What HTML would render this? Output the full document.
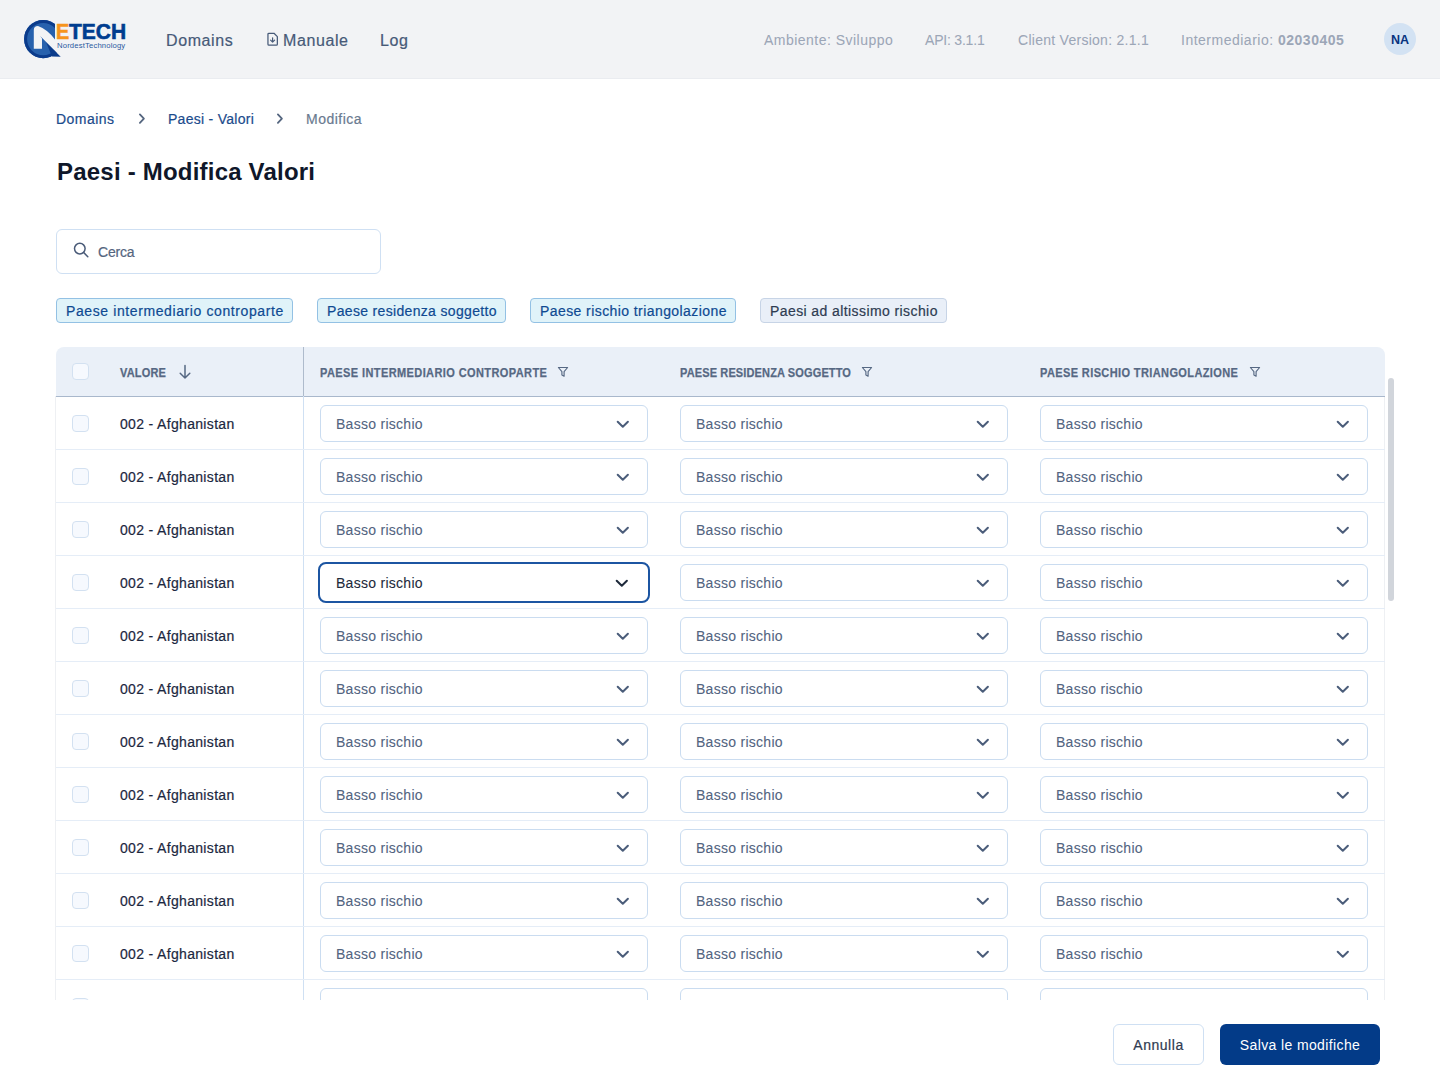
<!DOCTYPE html>
<html><head><meta charset="utf-8">
<style>
*{box-sizing:border-box;margin:0;padding:0}
html,body{width:1440px;height:1089px;overflow:hidden;background:#fff;font-family:"Liberation Sans",sans-serif;-webkit-text-stroke:0.2px currentColor}
.abs{position:absolute;white-space:nowrap}
#hdr{position:absolute;left:0;top:0;width:1440px;height:79px;background:#f2f3f5;border-bottom:1px solid #eaecf0}
.nav{font-size:16px;color:#475a78;line-height:16px;letter-spacing:0.6px}
.info{font-size:14px;color:#9ca6b7;line-height:14px;-webkit-text-stroke:0.05px currentColor}
#avatar{position:absolute;left:1384px;top:23.3px;width:32px;height:32px;border-radius:50%;background:#d3e2f3;color:#08337f;font-weight:700;font-size:12.5px;line-height:34px;text-align:center}
.bc{font-size:14px;line-height:14px}
.chip{position:absolute;top:298px;overflow:hidden;padding-top:1px!important;height:25px;border:1px solid #93c1e4;background:#e0f3f9;color:#0f4a92;border-radius:4px;font-size:14px;line-height:23px;padding:0 9px;white-space:nowrap}
.chip.g{border-color:#c7d4e6;background:#e9eff8;color:#2e3c52}
#table{position:absolute;left:55px;top:347px;width:1330px;height:653px;overflow:hidden}
#tb{position:absolute;left:0;top:49px;width:1330px;height:620px;border-left:1px solid #eef0f3;border-right:1px solid #eef0f3}
#thead{position:absolute;left:0;top:0;width:1329px;height:50px;background:#eaf0f8;border-bottom:1px solid #a9b8cc;border-radius:8px 8px 0 0}
.th{position:absolute;top:19.5px;transform:scaleX(0.88);transform-origin:0 0;font-size:12.5px;font-weight:700;color:#566883;line-height:12px;white-space:nowrap}
.row{position:absolute;left:0;width:1329px;height:53px;border-bottom:1px solid #e5edf7}
.cb{position:absolute;left:16px;width:17px;height:17px;border:1px solid #d3e1f1;background:#f6f9fe;border-radius:4px}
.val{position:absolute;left:64px;top:20px;letter-spacing:0.33px;font-size:14px;color:#1c2740;line-height:14px;white-space:nowrap}
.dd{position:absolute;top:8px;width:328px;height:37px;border:1px solid #cadcf0;border-radius:6px;background:#fff}
.dd span{position:absolute;left:15px;top:10.5px;letter-spacing:0.28px;-webkit-text-stroke:0.08px currentColor;font-size:14px;line-height:14px;color:#52647f;white-space:nowrap}
.dd svg{position:absolute;left:295px;top:13.5px}
.dd.f{border:2px solid #1c55a2;border-radius:8px;left:262px!important;top:6px;width:332px;height:41px}
.dd.f span{left:16px;top:12px;color:#1e2a3b}
.dd.f svg{left:295px;top:14.5px}
#vdiv{position:absolute;left:247px;top:0;width:1px;height:653px;background:#cfe0f3}
#scroll{position:absolute;left:1388px;top:378px;width:6px;height:223px;border-radius:3px;background:#d1d5db}
.btn{position:absolute;top:1024px;padding-top:1px;height:41px;border-radius:6px;font-size:14px;line-height:39px;text-align:center;white-space:nowrap}
b,#avatar,.nostroke{-webkit-text-stroke:0}
.th{-webkit-text-stroke:0.25px currentColor}
</style></head><body>
<div id="hdr">
  <svg class="abs" style="left:0;top:0" width="140" height="78" viewBox="0 0 140 78">
    <circle cx="43.2" cy="39.1" r="19.1" fill="#2761ad"/>
    <circle cx="43.2" cy="39.1" r="17.6" fill="none" stroke="#0b3b8b" stroke-width="3"/>
    <polygon points="46,42 60.9,56.8 52,56.6" fill="#0b3b8b"/>
    <path d="M33.8,48.7 L42,48.7 L42,38.5 L40.2,36 L60.9,56.8 L75,56.8 L75,0 L55,0 L55,39.5 Q47,29 38,26 Q33.8,26 33.8,30 Z" fill="#f2f3f5"/>
    <g transform="translate(55.9,39.3) scale(0.9,1)"><text x="0" y="0" font-family="Liberation Sans" font-weight="700" font-size="22" fill="#f7941d" stroke="#f7941d" stroke-width="0.6">E</text></g><g transform="translate(68.9,39.3) scale(0.955,1)"><text x="0" y="0" font-family="Liberation Sans" font-weight="700" font-size="22" fill="#003d8f" stroke="#003d8f" stroke-width="0.6">TECH</text></g>
    <text x="57" y="48.3" font-family="Liberation Sans" font-size="7.7" fill="#2a5aa0" letter-spacing="0.15">NordestTechnology</text>
  </svg>
  <div class="abs nav" style="left:166px;top:33px">Domains</div>
  <svg class="abs" style="left:266px;top:32px" width="14" height="15" viewBox="0 0 14 15">
    <path d="M3,1.25 h5 l3.35,3.35 v7.55 a1,1 0 0 1 -1,1 h-7.4 a1,1 0 0 1 -1,-1 v-9.9 a1,1 0 0 1 1,-1 z" fill="none" stroke="#475a78" stroke-width="1.25" stroke-linejoin="round"/>
    <path d="M6.6,5.8 v4.3 M4.6,8.1 l2,2 l2,-2" fill="none" stroke="#475a78" stroke-width="1.2" stroke-linecap="round" stroke-linejoin="round"/>
  </svg>
  <div class="abs nav" style="left:283px;top:33px">Manuale</div>
  <div class="abs nav" style="left:380px;top:33px">Log</div>
  <div class="abs info" style="left:764px;top:32.5px;letter-spacing:0.48px">Ambiente: Sviluppo</div>
  <div class="abs info" style="left:925px;top:32.5px;letter-spacing:-0.2px">API: 3.1.1</div>
  <div class="abs info" style="left:1018px;top:32.5px;letter-spacing:0.27px">Client Version: 2.1.1</div>
  <div class="abs info" style="left:1181px;top:32.5px;letter-spacing:0.5px">Intermediario: <b>02030405</b></div>
  <div id="avatar">NA</div>
</div>

<div class="abs bc" style="left:56px;top:112px;color:#1b4b8c;letter-spacing:0.45px">Domains</div>
<svg class="abs" style="left:137px;top:112px" width="10" height="14" viewBox="0 0 10 14"><path d="M2.9,2.4 L6.9,6.6 L2.9,10.8" fill="none" stroke="#55667f" stroke-width="1.8" stroke-linecap="round" stroke-linejoin="round"/></svg>
<div class="abs bc" style="left:168px;top:112px;color:#1b4b8c;letter-spacing:0.28px">Paesi - Valori</div>
<svg class="abs" style="left:275px;top:112px" width="10" height="14" viewBox="0 0 10 14"><path d="M2.9,2.4 L6.9,6.6 L2.9,10.8" fill="none" stroke="#55667f" stroke-width="1.8" stroke-linecap="round" stroke-linejoin="round"/></svg>
<div class="abs bc" style="left:306px;top:112px;color:#6a7a90;letter-spacing:0.5px">Modifica</div>

<div class="abs" style="left:57px;top:160px;letter-spacing:0.21px;-webkit-text-stroke:0;font-size:24px;line-height:24px;font-weight:700;color:#0f172a">Paesi - Modifica Valori</div>

<div class="abs" style="left:56px;top:229px;width:325px;height:45px;border:1px solid #cfe0f3;border-radius:6px"></div>
<svg class="abs" style="left:72px;top:241px" width="18" height="18" viewBox="0 0 18 18"><circle cx="7.8" cy="7.6" r="5.3" fill="none" stroke="#4a5b78" stroke-width="1.5"/><path d="M11.7,11.6 L15.8,15.8" stroke="#4a5b78" stroke-width="1.5" stroke-linecap="round"/></svg>
<div class="abs" style="left:98px;top:245px;letter-spacing:-0.2px;font-size:14px;line-height:14px;color:#55657e">Cerca</div>

<div class="chip" style="width:237px;left:56px;letter-spacing:0.6px">Paese intermediario controparte</div>
<div class="chip" style="width:189px;left:317px;letter-spacing:0.33px">Paese residenza soggetto</div>
<div class="chip" style="width:206px;left:530px;letter-spacing:0.42px">Paese rischio triangolazione</div>
<div class="chip g" style="width:187px;left:760px;letter-spacing:0.41px">Paesi ad altissimo rischio</div>

<div id="table"><div id="tb"></div><div style="position:absolute;left:1px;top:0;width:1329px;height:653px">
  <div id="thead">
    <div class="cb" style="top:16px"></div>
    <div class="th" style="left:64px;letter-spacing:0.2px">VALORE</div>
    <svg class="abs" style="left:121.5px;top:17px" width="14" height="16" viewBox="0 0 14 16"><path d="M7,1.5 V14 M2.2,9.2 L7,14 L11.8,9.2" fill="none" stroke="#566883" stroke-width="1.5" stroke-linecap="round" stroke-linejoin="round"/></svg>
    <div class="th" style="left:264px;letter-spacing:0.46px">PAESE INTERMEDIARIO CONTROPARTE</div>
    <div class="th" style="left:624px;letter-spacing:0.15px">PAESE RESIDENZA SOGGETTO</div>
    <div class="th" style="left:984px;letter-spacing:0.44px">PAESE RISCHIO TRIANGOLAZIONE</div><!--F--><svg class="abs" style="left:500px;top:18px" width="14" height="14" viewBox="0 0 14 14"><path d="M2.4,2.5 L11.6,2.5 L8.1,6.6 L8.1,11.2 L5.9,10.1 L5.9,6.6 Z" fill="none" stroke="#566883" stroke-width="1.15" stroke-linejoin="round"/></svg><svg class="abs" style="left:804px;top:18px" width="14" height="14" viewBox="0 0 14 14"><path d="M2.4,2.5 L11.6,2.5 L8.1,6.6 L8.1,11.2 L5.9,10.1 L5.9,6.6 Z" fill="none" stroke="#566883" stroke-width="1.15" stroke-linejoin="round"/></svg><svg class="abs" style="left:1192px;top:18px" width="14" height="14" viewBox="0 0 14 14"><path d="M2.4,2.5 L11.6,2.5 L8.1,6.6 L8.1,11.2 L5.9,10.1 L5.9,6.6 Z" fill="none" stroke="#566883" stroke-width="1.15" stroke-linejoin="round"/></svg><!--/F-->
  </div>
  <div id="vdiv"></div><div style="position:absolute;left:247px;top:0;width:1px;height:49px;background:#aebbcc"></div>
  <div id="rows"><div class="row" style="top:50px"><div class="cb" style="top:18px"></div><div class="val">002 - Afghanistan</div><div class="dd" style="left:264px"><span>Basso rischio</span><svg width="14" height="10" viewBox="0 0 14 10"><path d="M1.7,1.7 L6.8,6.8 L11.9,1.7" fill="none" stroke="#4b5d7a" stroke-width="2" stroke-linecap="round" stroke-linejoin="round"/></svg></div><div class="dd" style="left:624px"><span>Basso rischio</span><svg width="14" height="10" viewBox="0 0 14 10"><path d="M1.7,1.7 L6.8,6.8 L11.9,1.7" fill="none" stroke="#4b5d7a" stroke-width="2" stroke-linecap="round" stroke-linejoin="round"/></svg></div><div class="dd" style="left:984px"><span>Basso rischio</span><svg width="14" height="10" viewBox="0 0 14 10"><path d="M1.7,1.7 L6.8,6.8 L11.9,1.7" fill="none" stroke="#4b5d7a" stroke-width="2" stroke-linecap="round" stroke-linejoin="round"/></svg></div></div>
<div class="row" style="top:103px"><div class="cb" style="top:18px"></div><div class="val">002 - Afghanistan</div><div class="dd" style="left:264px"><span>Basso rischio</span><svg width="14" height="10" viewBox="0 0 14 10"><path d="M1.7,1.7 L6.8,6.8 L11.9,1.7" fill="none" stroke="#4b5d7a" stroke-width="2" stroke-linecap="round" stroke-linejoin="round"/></svg></div><div class="dd" style="left:624px"><span>Basso rischio</span><svg width="14" height="10" viewBox="0 0 14 10"><path d="M1.7,1.7 L6.8,6.8 L11.9,1.7" fill="none" stroke="#4b5d7a" stroke-width="2" stroke-linecap="round" stroke-linejoin="round"/></svg></div><div class="dd" style="left:984px"><span>Basso rischio</span><svg width="14" height="10" viewBox="0 0 14 10"><path d="M1.7,1.7 L6.8,6.8 L11.9,1.7" fill="none" stroke="#4b5d7a" stroke-width="2" stroke-linecap="round" stroke-linejoin="round"/></svg></div></div>
<div class="row" style="top:156px"><div class="cb" style="top:18px"></div><div class="val">002 - Afghanistan</div><div class="dd" style="left:264px"><span>Basso rischio</span><svg width="14" height="10" viewBox="0 0 14 10"><path d="M1.7,1.7 L6.8,6.8 L11.9,1.7" fill="none" stroke="#4b5d7a" stroke-width="2" stroke-linecap="round" stroke-linejoin="round"/></svg></div><div class="dd" style="left:624px"><span>Basso rischio</span><svg width="14" height="10" viewBox="0 0 14 10"><path d="M1.7,1.7 L6.8,6.8 L11.9,1.7" fill="none" stroke="#4b5d7a" stroke-width="2" stroke-linecap="round" stroke-linejoin="round"/></svg></div><div class="dd" style="left:984px"><span>Basso rischio</span><svg width="14" height="10" viewBox="0 0 14 10"><path d="M1.7,1.7 L6.8,6.8 L11.9,1.7" fill="none" stroke="#4b5d7a" stroke-width="2" stroke-linecap="round" stroke-linejoin="round"/></svg></div></div>
<div class="row" style="top:209px"><div class="cb" style="top:18px"></div><div class="val">002 - Afghanistan</div><div class="dd f" style="left:262px"><span>Basso rischio</span><svg width="14" height="10" viewBox="0 0 14 10"><path d="M1.7,1.7 L6.8,6.8 L11.9,1.7" fill="none" stroke="#1e2a3b" stroke-width="2" stroke-linecap="round" stroke-linejoin="round"/></svg></div><div class="dd" style="left:624px"><span>Basso rischio</span><svg width="14" height="10" viewBox="0 0 14 10"><path d="M1.7,1.7 L6.8,6.8 L11.9,1.7" fill="none" stroke="#4b5d7a" stroke-width="2" stroke-linecap="round" stroke-linejoin="round"/></svg></div><div class="dd" style="left:984px"><span>Basso rischio</span><svg width="14" height="10" viewBox="0 0 14 10"><path d="M1.7,1.7 L6.8,6.8 L11.9,1.7" fill="none" stroke="#4b5d7a" stroke-width="2" stroke-linecap="round" stroke-linejoin="round"/></svg></div></div>
<div class="row" style="top:262px"><div class="cb" style="top:18px"></div><div class="val">002 - Afghanistan</div><div class="dd" style="left:264px"><span>Basso rischio</span><svg width="14" height="10" viewBox="0 0 14 10"><path d="M1.7,1.7 L6.8,6.8 L11.9,1.7" fill="none" stroke="#4b5d7a" stroke-width="2" stroke-linecap="round" stroke-linejoin="round"/></svg></div><div class="dd" style="left:624px"><span>Basso rischio</span><svg width="14" height="10" viewBox="0 0 14 10"><path d="M1.7,1.7 L6.8,6.8 L11.9,1.7" fill="none" stroke="#4b5d7a" stroke-width="2" stroke-linecap="round" stroke-linejoin="round"/></svg></div><div class="dd" style="left:984px"><span>Basso rischio</span><svg width="14" height="10" viewBox="0 0 14 10"><path d="M1.7,1.7 L6.8,6.8 L11.9,1.7" fill="none" stroke="#4b5d7a" stroke-width="2" stroke-linecap="round" stroke-linejoin="round"/></svg></div></div>
<div class="row" style="top:315px"><div class="cb" style="top:18px"></div><div class="val">002 - Afghanistan</div><div class="dd" style="left:264px"><span>Basso rischio</span><svg width="14" height="10" viewBox="0 0 14 10"><path d="M1.7,1.7 L6.8,6.8 L11.9,1.7" fill="none" stroke="#4b5d7a" stroke-width="2" stroke-linecap="round" stroke-linejoin="round"/></svg></div><div class="dd" style="left:624px"><span>Basso rischio</span><svg width="14" height="10" viewBox="0 0 14 10"><path d="M1.7,1.7 L6.8,6.8 L11.9,1.7" fill="none" stroke="#4b5d7a" stroke-width="2" stroke-linecap="round" stroke-linejoin="round"/></svg></div><div class="dd" style="left:984px"><span>Basso rischio</span><svg width="14" height="10" viewBox="0 0 14 10"><path d="M1.7,1.7 L6.8,6.8 L11.9,1.7" fill="none" stroke="#4b5d7a" stroke-width="2" stroke-linecap="round" stroke-linejoin="round"/></svg></div></div>
<div class="row" style="top:368px"><div class="cb" style="top:18px"></div><div class="val">002 - Afghanistan</div><div class="dd" style="left:264px"><span>Basso rischio</span><svg width="14" height="10" viewBox="0 0 14 10"><path d="M1.7,1.7 L6.8,6.8 L11.9,1.7" fill="none" stroke="#4b5d7a" stroke-width="2" stroke-linecap="round" stroke-linejoin="round"/></svg></div><div class="dd" style="left:624px"><span>Basso rischio</span><svg width="14" height="10" viewBox="0 0 14 10"><path d="M1.7,1.7 L6.8,6.8 L11.9,1.7" fill="none" stroke="#4b5d7a" stroke-width="2" stroke-linecap="round" stroke-linejoin="round"/></svg></div><div class="dd" style="left:984px"><span>Basso rischio</span><svg width="14" height="10" viewBox="0 0 14 10"><path d="M1.7,1.7 L6.8,6.8 L11.9,1.7" fill="none" stroke="#4b5d7a" stroke-width="2" stroke-linecap="round" stroke-linejoin="round"/></svg></div></div>
<div class="row" style="top:421px"><div class="cb" style="top:18px"></div><div class="val">002 - Afghanistan</div><div class="dd" style="left:264px"><span>Basso rischio</span><svg width="14" height="10" viewBox="0 0 14 10"><path d="M1.7,1.7 L6.8,6.8 L11.9,1.7" fill="none" stroke="#4b5d7a" stroke-width="2" stroke-linecap="round" stroke-linejoin="round"/></svg></div><div class="dd" style="left:624px"><span>Basso rischio</span><svg width="14" height="10" viewBox="0 0 14 10"><path d="M1.7,1.7 L6.8,6.8 L11.9,1.7" fill="none" stroke="#4b5d7a" stroke-width="2" stroke-linecap="round" stroke-linejoin="round"/></svg></div><div class="dd" style="left:984px"><span>Basso rischio</span><svg width="14" height="10" viewBox="0 0 14 10"><path d="M1.7,1.7 L6.8,6.8 L11.9,1.7" fill="none" stroke="#4b5d7a" stroke-width="2" stroke-linecap="round" stroke-linejoin="round"/></svg></div></div>
<div class="row" style="top:474px"><div class="cb" style="top:18px"></div><div class="val">002 - Afghanistan</div><div class="dd" style="left:264px"><span>Basso rischio</span><svg width="14" height="10" viewBox="0 0 14 10"><path d="M1.7,1.7 L6.8,6.8 L11.9,1.7" fill="none" stroke="#4b5d7a" stroke-width="2" stroke-linecap="round" stroke-linejoin="round"/></svg></div><div class="dd" style="left:624px"><span>Basso rischio</span><svg width="14" height="10" viewBox="0 0 14 10"><path d="M1.7,1.7 L6.8,6.8 L11.9,1.7" fill="none" stroke="#4b5d7a" stroke-width="2" stroke-linecap="round" stroke-linejoin="round"/></svg></div><div class="dd" style="left:984px"><span>Basso rischio</span><svg width="14" height="10" viewBox="0 0 14 10"><path d="M1.7,1.7 L6.8,6.8 L11.9,1.7" fill="none" stroke="#4b5d7a" stroke-width="2" stroke-linecap="round" stroke-linejoin="round"/></svg></div></div>
<div class="row" style="top:527px"><div class="cb" style="top:18px"></div><div class="val">002 - Afghanistan</div><div class="dd" style="left:264px"><span>Basso rischio</span><svg width="14" height="10" viewBox="0 0 14 10"><path d="M1.7,1.7 L6.8,6.8 L11.9,1.7" fill="none" stroke="#4b5d7a" stroke-width="2" stroke-linecap="round" stroke-linejoin="round"/></svg></div><div class="dd" style="left:624px"><span>Basso rischio</span><svg width="14" height="10" viewBox="0 0 14 10"><path d="M1.7,1.7 L6.8,6.8 L11.9,1.7" fill="none" stroke="#4b5d7a" stroke-width="2" stroke-linecap="round" stroke-linejoin="round"/></svg></div><div class="dd" style="left:984px"><span>Basso rischio</span><svg width="14" height="10" viewBox="0 0 14 10"><path d="M1.7,1.7 L6.8,6.8 L11.9,1.7" fill="none" stroke="#4b5d7a" stroke-width="2" stroke-linecap="round" stroke-linejoin="round"/></svg></div></div>
<div class="row" style="top:580px"><div class="cb" style="top:18px"></div><div class="val">002 - Afghanistan</div><div class="dd" style="left:264px"><span>Basso rischio</span><svg width="14" height="10" viewBox="0 0 14 10"><path d="M1.7,1.7 L6.8,6.8 L11.9,1.7" fill="none" stroke="#4b5d7a" stroke-width="2" stroke-linecap="round" stroke-linejoin="round"/></svg></div><div class="dd" style="left:624px"><span>Basso rischio</span><svg width="14" height="10" viewBox="0 0 14 10"><path d="M1.7,1.7 L6.8,6.8 L11.9,1.7" fill="none" stroke="#4b5d7a" stroke-width="2" stroke-linecap="round" stroke-linejoin="round"/></svg></div><div class="dd" style="left:984px"><span>Basso rischio</span><svg width="14" height="10" viewBox="0 0 14 10"><path d="M1.7,1.7 L6.8,6.8 L11.9,1.7" fill="none" stroke="#4b5d7a" stroke-width="2" stroke-linecap="round" stroke-linejoin="round"/></svg></div></div>
<div class="row" style="top:633px"><div class="cb" style="top:18px"></div><div class="val">002 - Afghanistan</div><div class="dd" style="left:264px"><span>Basso rischio</span><svg width="14" height="10" viewBox="0 0 14 10"><path d="M1.7,1.7 L6.8,6.8 L11.9,1.7" fill="none" stroke="#4b5d7a" stroke-width="2" stroke-linecap="round" stroke-linejoin="round"/></svg></div><div class="dd" style="left:624px"><span>Basso rischio</span><svg width="14" height="10" viewBox="0 0 14 10"><path d="M1.7,1.7 L6.8,6.8 L11.9,1.7" fill="none" stroke="#4b5d7a" stroke-width="2" stroke-linecap="round" stroke-linejoin="round"/></svg></div><div class="dd" style="left:984px"><span>Basso rischio</span><svg width="14" height="10" viewBox="0 0 14 10"><path d="M1.7,1.7 L6.8,6.8 L11.9,1.7" fill="none" stroke="#4b5d7a" stroke-width="2" stroke-linecap="round" stroke-linejoin="round"/></svg></div></div></div>
</div></div>
<div id="scroll"></div>

<div class="btn" style="left:1113px;width:91px;border:1px solid #cfe0f3;color:#2f3b52;background:#fff;line-height:38px;letter-spacing:0.53px">Annulla</div>
<div class="btn" style="left:1220px;width:160px;background:#033b88;color:#fff;line-height:40px;letter-spacing:0.38px;-webkit-text-stroke:0">Salva le modifiche</div>
</body></html>
